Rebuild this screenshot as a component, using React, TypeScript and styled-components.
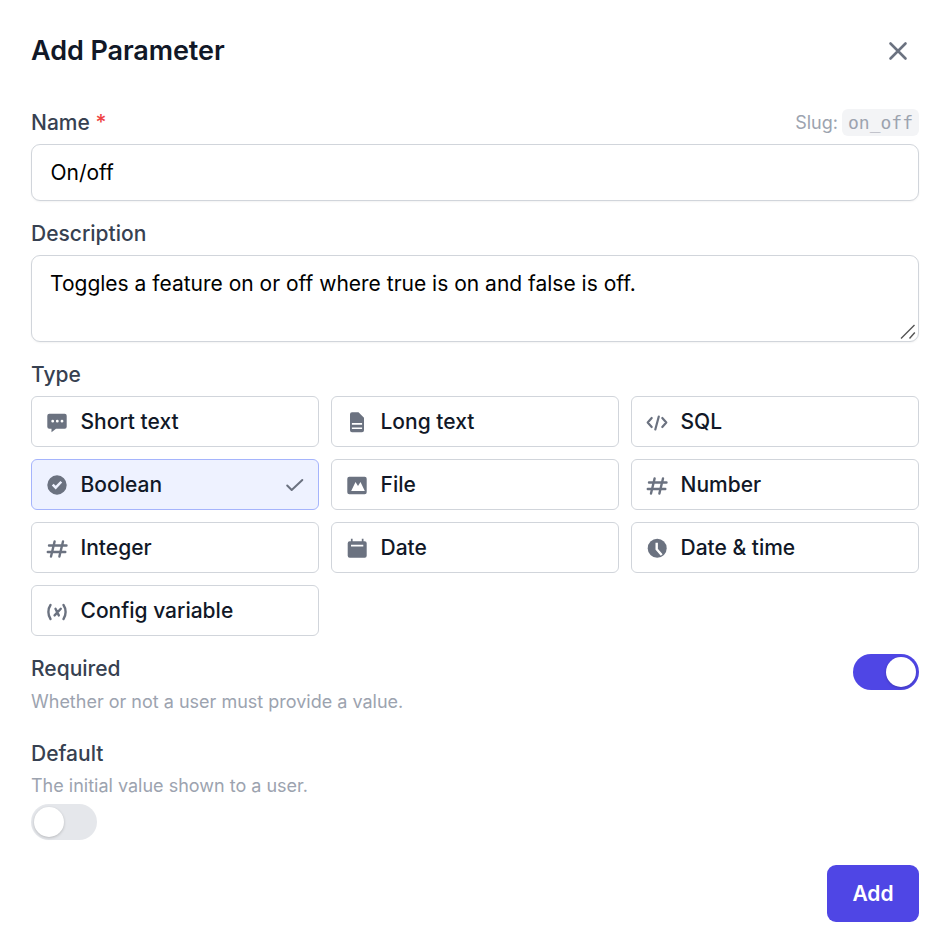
import React from "react";
import styled, { createGlobalStyle } from "styled-components";

const Global = createGlobalStyle`
  html, body { margin: 0; padding: 0; background: #fff; }
  * { box-sizing: border-box; }
  body { font-family: Inter, "Liberation Sans", sans-serif; }
`;

const Modal = styled.form`
  width: 946px;
  height: 950px;
  padding: 0 27px 0 31px;
  display: flex;
  flex-direction: column;
  background: #fff;
`;
const Header = styled.div`
  height: 101px;
  display: flex;
  align-items: center;
  justify-content: space-between;
`;
const Title = styled.h2`
  margin: 0;
  font-size: 27px;
  line-height: 36px;
  font-weight: 600;
  letter-spacing: -0.08px;
  color: #111827;
`;
const CloseBtn = styled.button`
  border: 0;
  background: none;
  padding: 0;
  width: 36px;
  height: 36px;
  margin-right: 3px;
  color: #6b7280;
  display: flex;
  align-items: center;
  justify-content: center;
`;
const LabelRow = styled.div`
  height: 43px;
  display: flex;
  align-items: center;
  justify-content: space-between;
`;
const Label = styled.label`
  font-size: 21px;
  line-height: 30px;
  font-weight: 500;
  color: #374151;
`;
const Star = styled.span`
  color: #ef4444;
`;
const Slug = styled.span`
  font-size: 18px;
  color: #9ca3af;
  display: flex;
  align-items: center;
  gap: 4px;
`;
const Code = styled.code`
  font-family: "DejaVu Sans Mono", "Liberation Mono", monospace;
  font-size: 18px;
  line-height: 27px;
  padding: 0 6px;
  border-radius: 6px;
  background: #f3f4f6;
  color: #9ca3af;
`;
const Input = styled.input`
  display: block;
  width: 100%;
  height: 57px;
  padding: 0 18.5px;
  border: 1.5px solid #d1d5db;
  border-radius: 9px;
  font: 400 21px Inter, sans-serif;
  color: #000;
  background: #fff;
  box-shadow: 0 1px 2px rgba(0, 0, 0, 0.05);
  outline: none;
`;
const AreaWrap = styled.div`
  position: relative;
  height: 87px;
`;
const Area = styled.textarea`
  display: block;
  width: 100%;
  height: 87px;
  padding: 12px 18px;
  border: 1.5px solid #d1d5db;
  border-radius: 9px;
  font: 400 21px/31px Inter, sans-serif;
  color: #000;
  background: #fff;
  box-shadow: 0 1px 2px rgba(0, 0, 0, 0.05);
  outline: none;
  resize: none;
`;
const Grip = styled.svg`
  position: absolute;
  right: 3px;
  bottom: 2px;
  width: 16px;
  height: 16px;
  color: #555;
  pointer-events: none;
`;
const DescLabelRow = styled(LabelRow)`
  height: 54px;
  padding-top: 12px;
`;
const TypeLabelRow = styled(LabelRow)`
  height: 54px;
  padding-top: 12px;
`;
const Grid = styled.div`
  display: grid;
  grid-template-columns: repeat(3, 288px);
  gap: 12px;
`;
const Option = styled.div<{ $active?: boolean }>`
  height: 51px;
  padding: 0 14px 0 12.5px;
  display: flex;
  align-items: center;
  gap: 12px;
  border: 1.5px solid ${(p) => (p.$active ? "#a5b4fc" : "#d1d5db")};
  border-radius: 6px;
  background: ${(p) => (p.$active ? "#eef2ff" : "#fff")};
  font-size: 21px;
  font-weight: 500;
  color: #111827;
`;
const OptionIcon = styled.svg`
  width: 24px;
  height: 24px;
  flex: none;
  color: #6b7280;
`;
const Tick = styled.svg`
  margin-left: auto;
  width: 21px;
  height: 21px;
  color: #6b7280;
`;
const ToggleRow = styled.div`
  margin-top: 18px;
  display: flex;
  justify-content: space-between;
  align-items: flex-start;
`;
const Block = styled.div`
  margin-top: 21.5px;
`;
const Help = styled.p`
  margin: 3px 0 0;
  font-size: 18px;
  line-height: 30px;
  color: #9ca3af;
`;
const DefaultHelp = styled(Help)`
  margin-top: 2px;
`;
const Toggle = styled.span<{ $on?: boolean }>`
  display: flex;
  width: 66px;
  height: 36px;
  padding: 3px;
  border-radius: 18px;
  justify-content: ${(p) => (p.$on ? "flex-end" : "flex-start")};
  background: ${(p) => (p.$on ? "#4f46e5" : "#e5e7eb")};
`;
const DefaultToggle = styled(Toggle)`
  margin-top: 3.5px;
`;
const Knob = styled.span`
  width: 30px;
  height: 30px;
  border-radius: 50%;
  background: #fff;
  box-shadow: 0 1px 3px rgba(0, 0, 0, 0.2);
`;
const Footer = styled.div`
  margin-top: 25px;
  display: flex;
  justify-content: flex-end;
`;
const AddBtn = styled.button`
  width: 92px;
  height: 57px;
  border: 0;
  border-radius: 9px;
  background: #4f46e5;
  color: #fff;
  font: 600 21px Inter, sans-serif;
`;

const fill = "currentColor";
const icons: Record<string, React.ReactNode> = {
  chat: (
    <path
      fill={fill}
      fillRule="evenodd"
      d="M4.300 3.800h15.400a2 2 0 0 1 2 2v11a2 2 0 0 1-2 2H11l-4.500 3.400V18.800H4.300a2 2 0 0 1-2-2v-11a2 2 0 0 1 2-2zM7.700 9.800a1.400 1.400 0 1 0 0 2.800 1.400 1.400 0 0 0 0-2.800zm4.600 0a1.400 1.400 0 1 0 0 2.800 1.400 1.400 0 0 0 0-2.800zm4.700 0a1.400 1.400 0 1 0 0 2.800 1.400 1.400 0 0 0 0-2.800z"
    />
  ),
  doc: (
    <path
      fill={fill}
      fillRule="evenodd"
      d="M7 2.200h6.500L19 7.700v12.500a2 2 0 0 1-2 2H7a2 2 0 0 1-2-2v-16a2 2 0 0 1 2-2zM6.900 13v1.700h10.200V13zM6.900 17.400v1.700h10.200v-1.700z"
    />
  ),
  check: (
    <path
      fill={fill}
      fillRule="evenodd"
      d="M12 2.300a9.700 9.700 0 1 1 0 19.400 9.700 9.700 0 0 1 0-19.400zm5.200 7.300-1.800-1.700-4.700 4.900-2.100-2.100-1.800 1.800 3.900 3.900z"
    />
  ),
  image: (
    <path
      fill={fill}
      fillRule="evenodd"
      d="M4.300 3.800h15.400a2 2 0 0 1 2 2v13.400a2 2 0 0 1-2 2H4.300a2 2 0 0 1-2-2V5.800a2 2 0 0 1 2-2zM6.200 18h13.600l-4.300-9-2.500 4-2.500-4z"
    />
  ),
  hash: (
    <path
      fill="none"
      stroke={fill}
      strokeWidth="2.400"
      strokeLinecap="round"
      d="M4 9.500h17.500M2.800 16h17.500M9.600 5.500 6 20.500M18 5.500l-3.600 15"
    />
  ),
  calendar: (
    <path
      fill={fill}
      fillRule="evenodd"
      d="M5.900 2.800h1.700v2.400h9.200V2.800h1.700v2.400h1.200a2 2 0 0 1 2 2v12.600a2 2 0 0 1-2 2H4.700a2 2 0 0 1-2-2V7.200a2 2 0 0 1 2-2h1.200zM6 8.800v1.700h12.300V8.800z"
    />
  ),
  clock: (
    <>
      <circle cx="12.200" cy="12.300" r="9.500" fill={fill} />
      <path d="M11.700 6.800v6.500l5 5.700" fill="none" stroke="#fff" strokeWidth="2.400" strokeLinejoin="round" />
    </>
  ),
  code: (
    <path
      fill="none"
      stroke={fill}
      strokeWidth="2.200"
      strokeLinecap="round"
      strokeLinejoin="round"
      d="M6.700 8 2.700 12.500l4 4.500M17.300 8l4 4.500-4 4.500M13.800 6.500 10.300 19.500"
    />
  ),
  variable: (
    <g fill="none" stroke={fill} strokeWidth="2.400" strokeLinecap="round" strokeLinejoin="round">
      <path d="M5.500 6C2.700 10 2.700 16 5.500 20M18.500 6c2.800 4 2.800 10 0 14M10.500 9.800l3.300 6.600M15.800 9.800l-6.200 6.600" />
    </g>
  ),
};

const types = [
  { name: "Short text", icon: "chat" },
  { name: "Long text", icon: "doc" },
  { name: "SQL", icon: "code" },
  { name: "Boolean", icon: "check", active: true },
  { name: "File", icon: "image" },
  { name: "Number", icon: "hash" },
  { name: "Integer", icon: "hash" },
  { name: "Date", icon: "calendar" },
  { name: "Date & time", icon: "clock" },
  { name: "Config variable", icon: "variable" },
];

export default function App() {
  return (
    <>
      <Global />
      <Modal>
        <Header>
          <Title>Add Parameter</Title>
          <CloseBtn type="button" aria-label="Close">
            <svg width="24" height="24" viewBox="0 0 24 24" fill="none" stroke="currentColor" strokeWidth="2.600" strokeLinecap="round">
              <path d="M4.500 4.500l15 15M19.500 4.500l-15 15" />
            </svg>
          </CloseBtn>
        </Header>
        <LabelRow>
          <Label>
            Name <Star>*</Star>
          </Label>
          <Slug>
            Slug: <Code>on_off</Code>
          </Slug>
        </LabelRow>
        <Input defaultValue="On/off" />
        <DescLabelRow>
          <Label>Description</Label>
        </DescLabelRow>
        <AreaWrap>
          <Area defaultValue="Toggles a feature on or off where true is on and false is off." />
          <Grip viewBox="0 0 16 16" fill="none" stroke="currentColor" strokeWidth="1.400">
            <path d="M1 14.500 14.500 1M9.500 14.500l5.300-6" />
          </Grip>
        </AreaWrap>
        <TypeLabelRow>
          <Label>Type</Label>
        </TypeLabelRow>
        <Grid>
          {types.map((t) => (
            <Option key={t.name} $active={t.active}>
              <OptionIcon viewBox="0 0 24 24">{icons[t.icon]}</OptionIcon>
              {t.name}
              {t.active && (
                <Tick viewBox="0 0 21 21" fill="none" stroke="currentColor" strokeWidth="2" strokeLinecap="round" strokeLinejoin="round">
                  <path d="M4.200 11.500l4.500 4.500L19.300 6" />
                </Tick>
              )}
            </Option>
          ))}
        </Grid>
        <ToggleRow>
          <div>
            <Label>Required</Label>
            <Help>Whether or not a user must provide a value.</Help>
          </div>
          <Toggle $on>
            <Knob />
          </Toggle>
        </ToggleRow>
        <Block>
          <Label>Default</Label>
          <DefaultHelp>The initial value shown to a user.</DefaultHelp>
          <DefaultToggle>
            <Knob />
          </DefaultToggle>
        </Block>
        <Footer>
          <AddBtn type="button">Add</AddBtn>
        </Footer>
      </Modal>
    </>
  );
}
